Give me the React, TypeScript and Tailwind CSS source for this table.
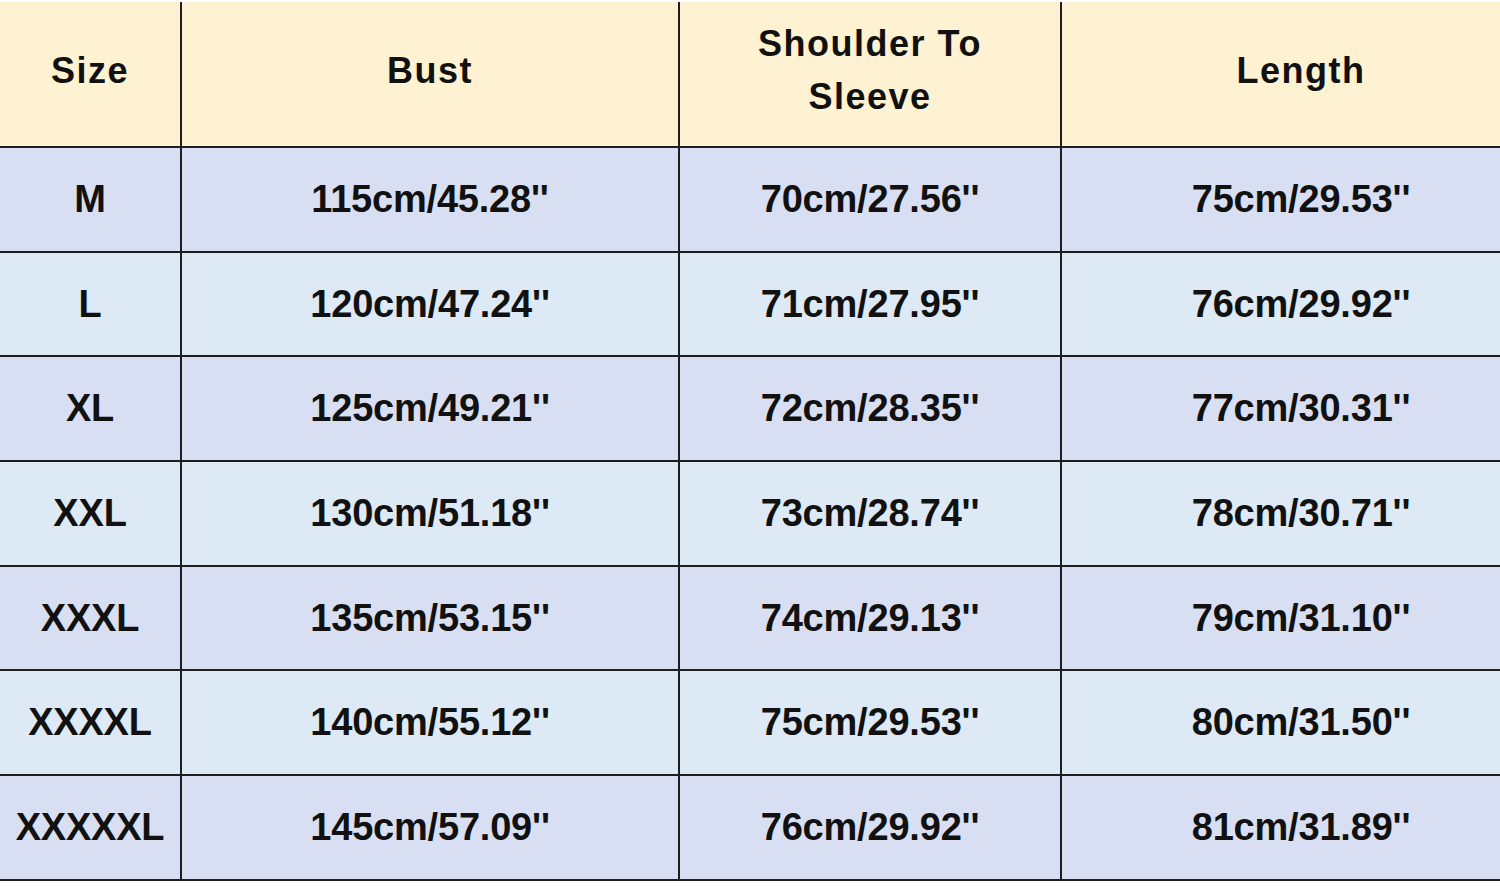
import React from "react";

const rows = [
  ["M", "115cm/45.28''", "70cm/27.56''", "75cm/29.53''"],
  ["L", "120cm/47.24''", "71cm/27.95''", "76cm/29.92''"],
  ["XL", "125cm/49.21''", "72cm/28.35''", "77cm/30.31''"],
  ["XXL", "130cm/51.18''", "73cm/28.74''", "78cm/30.71''"],
  ["XXXL", "135cm/53.15''", "74cm/29.13''", "79cm/31.10''"],
  ["XXXXL", "140cm/55.12''", "75cm/29.53''", "80cm/31.50''"],
  ["XXXXXL", "145cm/57.09''", "76cm/29.92''", "81cm/31.89''"],
];

export default function App() {
  return (
    <div
      className="w-[1500px] h-[886px] bg-white overflow-hidden pt-[2px] text-[#111]"
      style={{ fontFamily: '"Liberation Sans", Arial, sans-serif' }}
    >
      <div className="w-[1540px]">
        <div className="flex h-[146px] pb-[8px] bg-[#fff2d2] border-b-2 border-[#1e1e1e] font-bold text-[36px] tracking-[1.5px] leading-[53px]">
          <div className="w-[182px] border-r-2 border-[#1e1e1e] flex items-center justify-center -mb-[8px] pb-[8px]">Size</div>
          <div className="w-[498px] border-r-2 border-[#1e1e1e] flex items-center justify-center -mb-[8px] pb-[8px]">Bust</div>
          <div className="w-[382px] border-r-2 border-[#1e1e1e] flex items-center justify-center text-center -mb-[8px] pb-[8px]">
            Shoulder To<br />Sleeve
          </div>
          <div className="w-[478px] flex items-center justify-center">Length</div>
        </div>
        {rows.map((r, i) => (
          <div
            key={i}
            className={`flex h-[104.7px] border-b-2 border-[#1e1e1e] font-bold text-[38px] tracking-[-0.2px] ${
              i % 2 === 0 ? "bg-[#d9dff2]" : "bg-[#dde9f5]"
            }`}
          >
            <div className="w-[182px] border-r-2 border-[#1e1e1e] flex items-center justify-center">{r[0]}</div>
            <div className="w-[498px] border-r-2 border-[#1e1e1e] flex items-center justify-center">{r[1]}</div>
            <div className="w-[382px] border-r-2 border-[#1e1e1e] flex items-center justify-center">{r[2]}</div>
            <div className="w-[478px] flex items-center justify-center">{r[3]}</div>
          </div>
        ))}
      </div>
    </div>
  );
}
